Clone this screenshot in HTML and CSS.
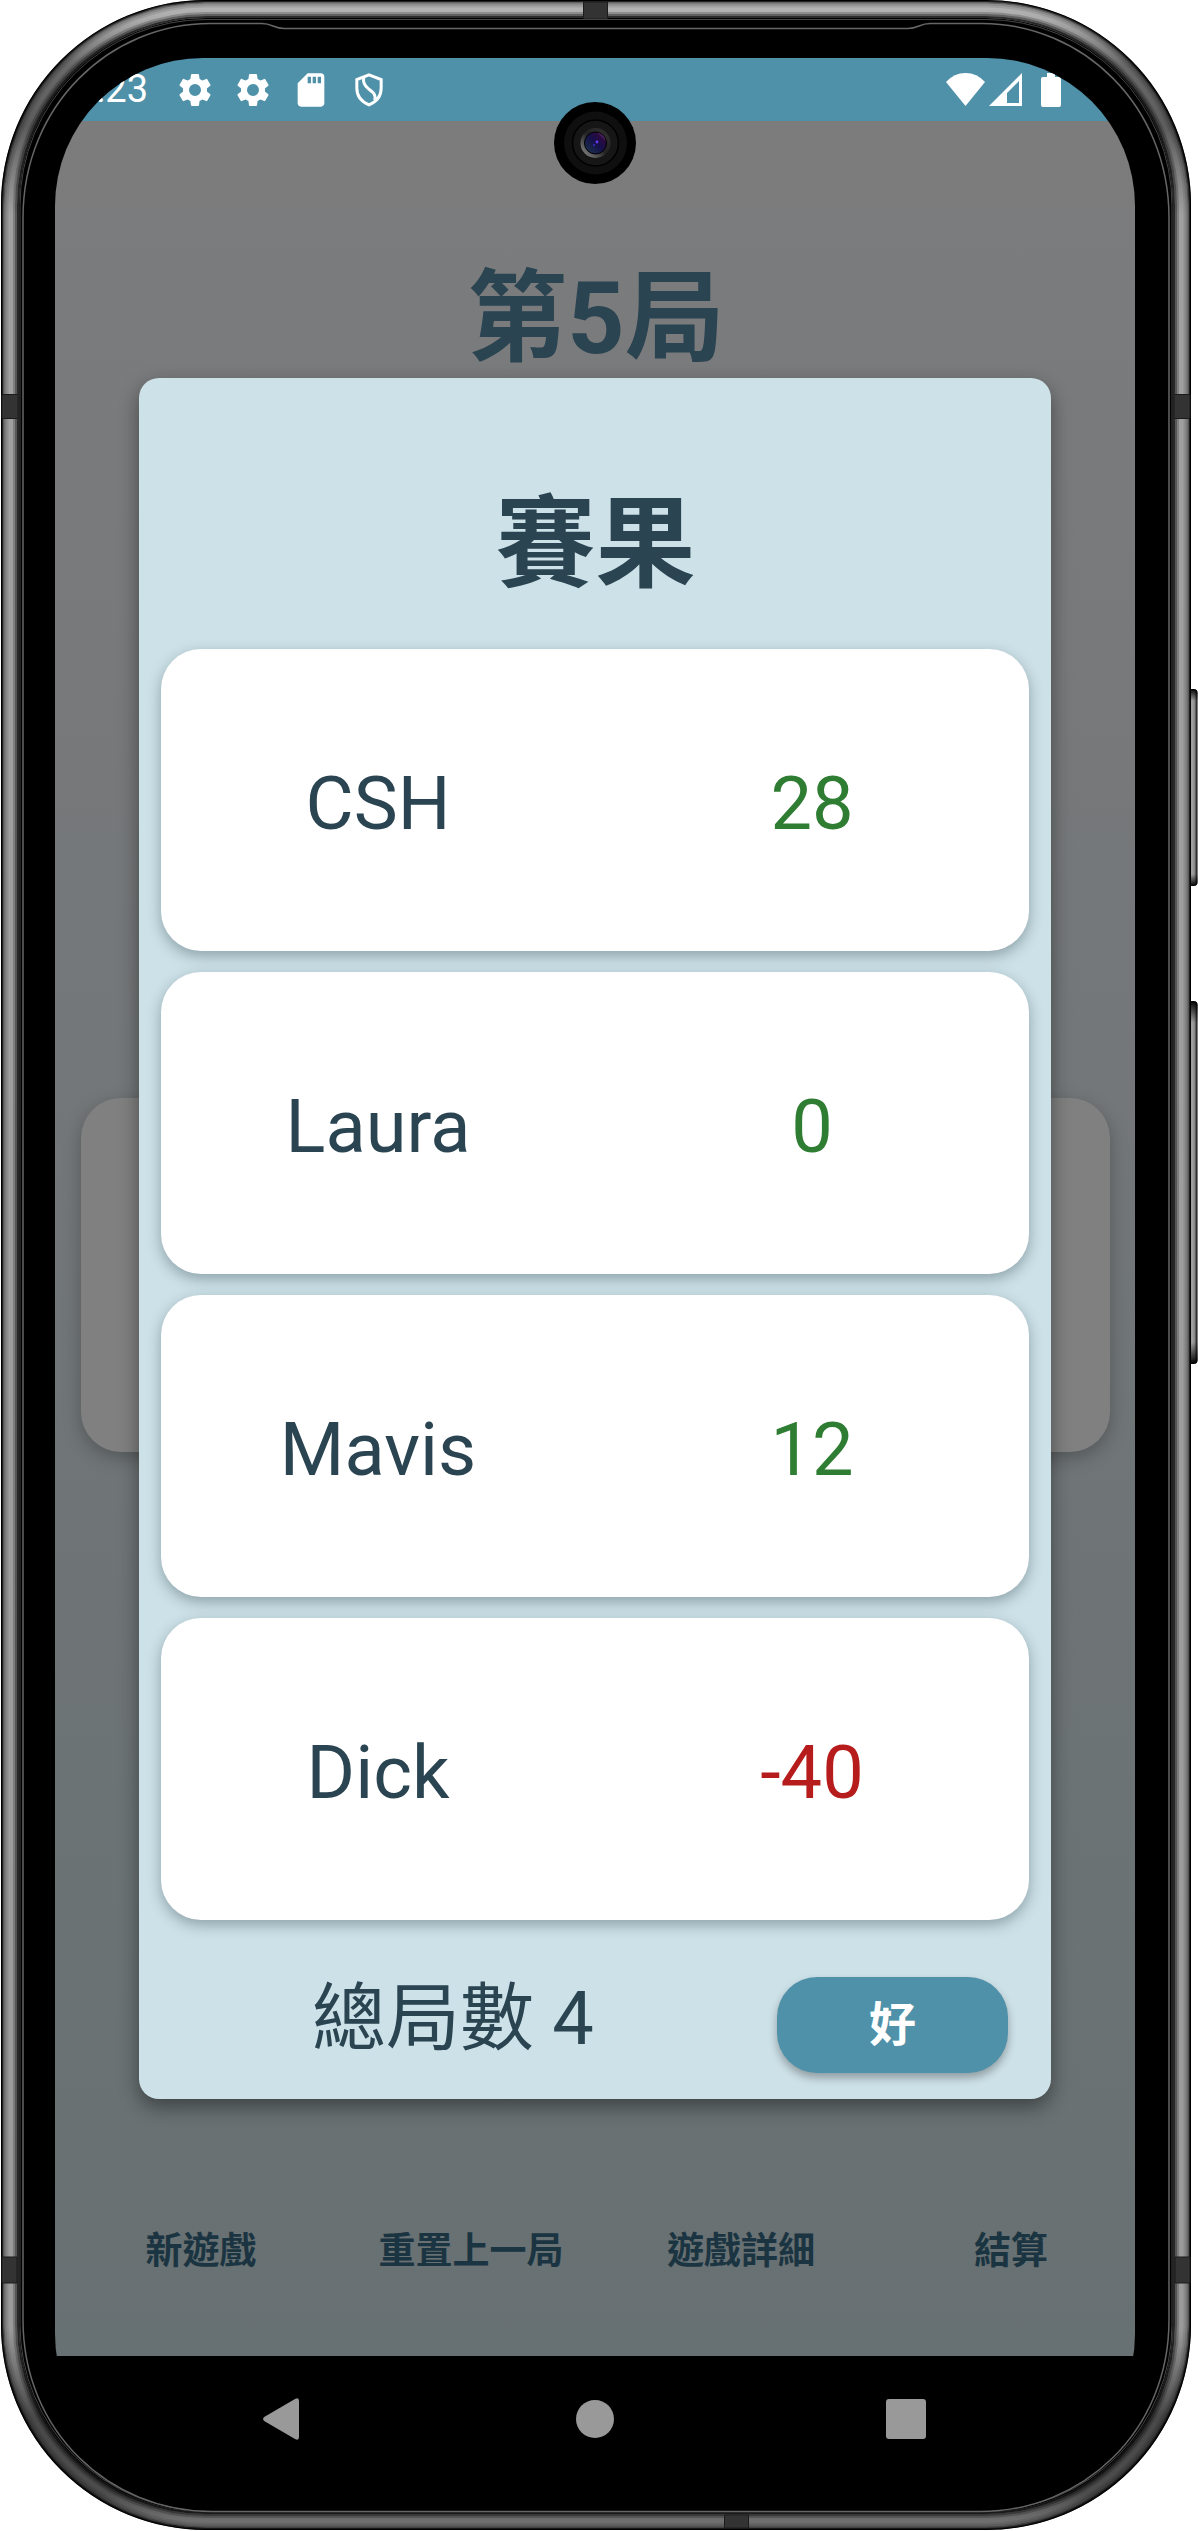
FILE: index.html
```html
<!DOCTYPE html>
<html lang="zh-Hant">
<head>
<meta charset="utf-8">
<title>賽果</title>
<link rel="stylesheet" href="styles.css">
</head>
<body>
<div class="phone">
  <svg class="frame" width="1198" height="2531" viewBox="0 0 1198 2531" fill="none">
    <defs>
      <linearGradient id="metal" gradientUnits="userSpaceOnUse" x1="0" y1="0" x2="0" y2="2531">
        <stop offset="0" stop-color="#b8b8b8"/>
        <stop offset=".008" stop-color="#aaa"/>
        <stop offset=".026" stop-color="#686868"/>
        <stop offset=".05" stop-color="#5c5c5c"/>
        <stop offset=".085" stop-color="#a0a0a0"/>
        <stop offset=".92" stop-color="#9a9a9a"/>
        <stop offset=".955" stop-color="#484848"/>
        <stop offset=".985" stop-color="#4c4c4c"/>
        <stop offset="1" stop-color="#7c7c7c"/>
      </linearGradient>
      <linearGradient id="key" x1="0" x2="1" y1="0" y2="0">
        <stop offset="0" stop-color="#333"/>
        <stop offset=".4" stop-color="#a8a8a8"/>
        <stop offset=".7" stop-color="#888"/>
        <stop offset="1" stop-color="#000"/>
      </linearGradient>
      <linearGradient id="keyEnds" x1="0" x2="0" y1="0" y2="1">
        <stop offset="0" stop-color="#000"/>
        <stop offset=".06" stop-color="#000" stop-opacity="0"/>
        <stop offset=".94" stop-color="#000" stop-opacity="0"/>
        <stop offset="1" stop-color="#000"/>
      </linearGradient>
    </defs>
    <rect x="1188" y="689" width="9.5" height="197" rx="4" fill="url(#key)"/>
    <rect x="1188" y="689" width="9.5" height="197" rx="4" fill="url(#keyEnds)"/>
    <rect x="1188" y="1001" width="9.5" height="363" rx="4" fill="url(#key)"/>
    <rect x="1188" y="1001" width="9.5" height="363" rx="4" fill="url(#keyEnds)"/>
    <rect x="1" y="0" width="1190" height="2530" rx="205" fill="#000"/>
    <rect x="10.5" y="9.5" width="1171" height="2511" rx="195.500" stroke="url(#metal)" stroke-width="17"/>
    <g stroke="#000">
      <rect x="2" y="1" width="1188" height="2528" rx="204" stroke-width="2" opacity=".75"/>
      <rect x="3.500" y="2.500" width="1185" height="2525" rx="202.500" stroke-width="2" opacity=".45"/>
      <rect x="5.500" y="4.500" width="1181" height="2521" rx="200.500" stroke-width="2" opacity=".22"/>
      <rect x="7.500" y="6.500" width="1177" height="2517" rx="198.500" stroke-width="2" opacity=".1"/>
      <rect x="14" y="13" width="1164" height="2504" rx="192" stroke-width="2" opacity=".2"/>
      <rect x="16" y="15" width="1160" height="2500" rx="190" stroke-width="2" opacity=".45"/>
      <rect x="18" y="17" width="1156" height="2496" rx="188" stroke-width="2" opacity=".75"/>
    </g>
    <g fill="#333" stroke="#1c1c1c">
      <path d="M2 394.500h16v24H2zM1174 394.500h16v24h-16zM583.500 2h24v17h-24zM2 2257h15v26H2zM1175 2257h15v26h-15zM724.500 2515h24v13h-24z"/>
    </g>
    <rect x="20" y="19.500" width="1152" height="2491" rx="186" stroke="#444" stroke-width="1"/>
    <path d="M23 2320V218C23 105 110 23.500 210 23.500H262C272 23.500 274 28.500 284 28.500H908C918 28.500 920 23.500 930 23.500H982C1082 23.500 1169 105 1169 218V2320C1169 2432 1082 2511.500 980 2511.500H212C110 2511.500 23 2432 23 2320Z" fill="#000" stroke="#666" stroke-width="1.500"/>
  </svg>

  <main class="screen">
    <header class="status">
      <span class="clock">12:23</span>
      <svg class="sys gear" viewBox="0 0 24 24"><path d="M19.140 12.940c.04-.3.060-.61.060-.94 0-.32-.02-.64-.07-.94l2.030-1.580a.49.49 0 0 0 .12-.61l-1.920-3.320a.488.488 0 0 0-.59-.22l-2.390.96c-.5-.38-1.030-.7-1.620-.94l-.36-2.540a.484.484 0 0 0-.48-.41h-3.840c-.24 0-.43.17-.47.41l-.36 2.540c-.59.24-1.130.57-1.620.94l-2.390-.96c-.22-.08-.47 0-.59.22L2.740 8.870c-.12.21-.08.47.12.61l2.030 1.580c-.05.3-.09.63-.09.94s.02.64.07.94l-2.030 1.580a.49.49 0 0 0-.12.61l1.920 3.320c.12.22.37.29.59.22l2.390-.96c.5.38 1.030.7 1.620.94l.36 2.540c.05.24.24.41.48.41h3.840c.24 0 .44-.17.47-.41l.36-2.540c.59-.24 1.130-.56 1.620-.94l2.390.96c.22.08.47 0 .59-.22l1.920-3.320c.12-.22.070-.47-.12-.61zM12 15.600A3.600 3.600 0 1 1 12 8.400a3.600 3.600 0 0 1 0 7.200z"/></svg>
      <svg class="sys gear" viewBox="0 0 24 24"><path d="M19.140 12.940c.04-.3.060-.61.060-.94 0-.32-.02-.64-.07-.94l2.030-1.580a.49.49 0 0 0 .12-.61l-1.920-3.320a.488.488 0 0 0-.59-.22l-2.390.96c-.5-.38-1.030-.7-1.620-.94l-.36-2.540a.484.484 0 0 0-.48-.41h-3.840c-.24 0-.43.17-.47.41l-.36 2.540c-.59.24-1.130.57-1.620.94l-2.390-.96c-.22-.08-.47 0-.59.22L2.740 8.870c-.12.21-.08.47.12.61l2.030 1.580c-.05.3-.09.63-.09.94s.02.64.07.94l-2.030 1.580a.49.49 0 0 0-.12.61l1.920 3.320c.12.22.37.29.59.22l2.390-.96c.5.38 1.030.7 1.620.94l.36 2.540c.05.24.24.41.48.41h3.840c.24 0 .44-.17.47-.41l.36-2.540c.59-.24 1.130-.56 1.620-.94l2.390.96c.22.08.47 0 .59-.22l1.920-3.320c.12-.22.070-.47-.12-.61zM12 15.600A3.600 3.600 0 1 1 12 8.400a3.600 3.600 0 0 1 0 7.200z"/></svg>
      <svg class="sys" viewBox="0 0 24 24"><path d="M18 2h-8L4 8v12c0 1.100.9 2 2 2h12c1.100 0 2-.9 2-2V4c0-1.100-.9-2-2-2zm-6 6h-2V4h2v4zm3 0h-2V4h2v4zm3 0h-2V4h2v4z"/></svg>
      <svg class="sys" viewBox="0 0 24 24" ><path d="M12 2.900l7.300 2.800v5.200c0 4.500-2.600 8-7.300 10-4.700-2-7.300-5.500-7.300-10V5.700zM8.800 4.500c-.5 3 .2 4.700 2.800 6.700 3 2.200 4.600 3.400 3.900 7" fill="none" stroke="#fff" stroke-width="1.800"/></svg>
      <span class="spacer"></span>
      <svg class="wifi" width="39" height="33" viewBox="0 0 39 33"><path d="M0 9Q8 0 19.500 0T39 9L19.500 33z"/></svg>
      <svg class="signal" width="33" height="33" viewBox="0 0 33 33"><path fill-rule="evenodd" d="M33 0V33H0zM30 8L18 20V30H30z"/></svg>
      <svg class="battery" width="20" height="34" viewBox="0 0 20 34"><path d="M6 0H14V4H18Q20 4 20 6V32Q20 34 18 34H2Q0 34 0 32V6Q0 4 2 4H6z"/></svg>
    </header>

    <section class="app">
      <h1 class="round">第5局</h1>
      <div class="board"></div>
      <nav class="menu"><span>新遊戲</span><span>重置上一局</span><span>遊戲詳細</span><span>結算</span></nav>
    </section>

    <footer class="navbar">
      <svg width="38" height="44" viewBox="0 0 38 44"><path d="M3 19.500L33 2Q37 0 37 4V40Q37 44 33 42L3 24.500Q-1 22 3 19.500z"/></svg>
      <svg class="home" width="38" height="38" viewBox="0 0 38 38"><circle cx="19" cy="19" r="19"/></svg>
      <svg width="40" height="40" viewBox="0 0 40 40"><rect width="40" height="40" rx="3"/></svg>
    </footer>

    <section class="dialog">
      <h2 class="heading">賽果</h2>
      <div class="cards">
        <div class="card"><span>CSH</span><span class="win">28</span></div>
        <div class="card"><span>Laura</span><span class="win">0</span></div>
        <div class="card"><span>Mavis</span><span class="win">12</span></div>
        <div class="card"><span>Dick</span><span class="loss">-40</span></div>
      </div>
      <div class="actions">
        <span class="total">總局數 4</span>
        <button class="ok">好</button>
      </div>
    </section>
  </main>

  <svg class="camera" width="82" height="82" viewBox="0 0 82 82">
    <defs>
      <linearGradient id="rim" x1="0" y1="1" x2="1" y2="0"><stop offset="0" stop-color="#999"/><stop offset=".5" stop-color="#222"/><stop offset="1" stop-color="#333"/></linearGradient>
      <linearGradient id="lens" x1="0" y1="1" x2="1" y2="0"><stop offset="0" stop-color="#1d3a48"/><stop offset=".5" stop-color="#15104a"/><stop offset=".75" stop-color="#2a0a40"/><stop offset="1" stop-color="#b070c0"/></linearGradient>
    </defs>
    <circle cx="41" cy="41" r="41" fill="#000"/>
    <circle cx="41.500" cy="41" r="31.500" fill="#0f0f0f"/>
    <circle cx="41.500" cy="41" r="23" fill="#161616" stroke="#000" stroke-width="1.500"/>
    <circle cx="41.500" cy="41" r="15" fill="url(#rim)"/>
    <circle cx="41.500" cy="41" r="11" fill="url(#lens)" stroke="#000"/>
    <circle cx="43" cy="40" r="1.400" fill="#6a3cf0"/>
    <circle cx="40" cy="43" r="1" fill="#3c2cc0"/>
  </svg>
</div>
</body>
</html>
```
FILE: styles.css
```css
* { box-sizing: border-box; }

body {
  margin: 0;
  background: #fff;
  font-family: Roboto, "Noto Sans CJK TC", sans-serif;
  color: #2a4451;
}

.phone {
  position: relative;
  width: 1198px;
  height: 2531px;
  padding: 58px 63px 0 55px;
  overflow: hidden;
}

.frame { position: absolute; left: 0; top: 0; }

.camera { position: absolute; left: 554px; top: 102px; }

.screen {
  position: relative;
  display: flex;
  flex-direction: column;
  width: 1080px;
  height: 2424px;
  border-radius: 148px;
  overflow: hidden;
}

.status {
  display: flex;
  align-items: center;
  height: 63px;
  padding: 0 74px 0 0;
  background: #4f91a9;
  color: #fff;
  fill: #fff;
}

.clock {
  width: 93px;
  margin-right: 27px;
  font-size: 38px;
  line-height: 63px;
  display: flex;
  justify-content: flex-end;
}

.sys { width: 40px; height: 40px; margin-right: 18px; }
.spacer { flex: 1; }
.signal { margin-left: 4px; }
.battery { margin-left: 19px; }

.app {
  display: flex;
  flex-direction: column;
  height: 2235px;
  background: linear-gradient(#7c7c7d, #677072);
}

.round {
  height: 200px;
  margin: 98px 0 0;
  padding-left: 2px;
  font-size: 100px;
  line-height: 200px;
  text-align: center;
}

.board {
  width: 1029px;
  height: 354px;
  margin: 679px 0 0 26px;
  border-radius: 40px;
  background: #808080;
  box-shadow: 0 6px 18px rgba(0, 0, 0, .26);
}

.menu {
  display: grid;
  grid-template-columns: repeat(4, 270px);
  height: 80px;
  margin: 760px -11px 0 11px;
  color: #1b3441;
  font-size: 37px;
  font-weight: 700;
  line-height: 80px;
  text-align: center;
}

.navbar {
  display: flex;
  align-items: center;
  justify-content: space-between;
  height: 126px;
  padding: 0 209px 0 207px;
  background: #000;
  fill: #999;
}

.home { margin-left: 3px; }

.dialog {
  position: absolute;
  left: 84px;
  top: 320px;
  width: 912px;
  height: 1721px;
  padding: 0 22px;
  border-radius: 20px;
  background: #cde1e8;
  box-shadow: 0 8px 20px rgba(0, 0, 0, .42);
}

.heading {
  height: 271px;
  margin: 0;
  padding: 67px 0 0 1px;
  font-size: 100px;
  line-height: 200px;
  text-align: center;
}

.cards { display: grid; gap: 21px; }

.card {
  display: grid;
  grid-template-columns: 1fr 1fr;
  align-items: center;
  height: 302px;
  padding-top: 8px;
  border-radius: 40px;
  background: #fff;
  box-shadow: 0 5px 14px rgba(30, 50, 60, .36);
  font-size: 74px;
  line-height: 100px;
  text-align: center;
}

.win { color: #2e7d32; }
.loss { color: #b71c1c; }

.actions {
  display: flex;
  align-items: flex-start;
  justify-content: space-between;
  padding: 57px 21px 0 151px;
}

.total { padding-top: 2px; font-size: 74px; line-height: 80px; }

.ok {
  width: 231px;
  height: 96px;
  padding: 0;
  border: 0;
  border-radius: 40px;
  background: #4f91a9;
  box-shadow: 0 5px 9px rgba(0, 0, 0, .3);
  color: #fff;
  font: 700 47px/96px Roboto, "Noto Sans CJK TC", sans-serif;
}
```
